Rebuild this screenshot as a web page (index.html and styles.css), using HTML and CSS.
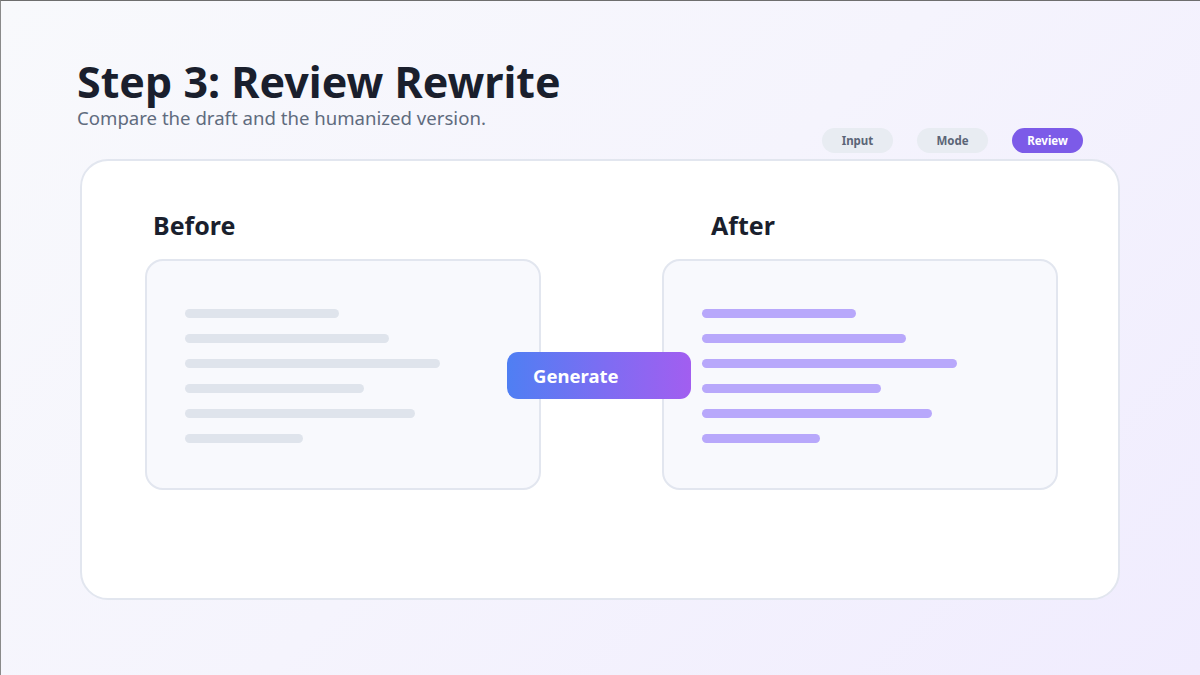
FILE: index.html
```html
<!DOCTYPE html>
<html lang="en">
<head>
<meta charset="utf-8">
<title>Step 3: Review Rewrite</title>
<link rel="stylesheet" href="styles.css">
</head>
<body>
<div class="page">
  <header class="header">
    <h1 class="title">Step 3: Review Rewrite</h1>
    <p class="subtitle">Compare the draft and the humanized version.</p>
  </header>
  <nav class="steps">
    <span class="pill">Input</span>
    <span class="pill">Mode</span>
    <span class="pill pill-active">Review</span>
  </nav>
  <main class="card">
    <section class="col col-before">
      <h2 class="label label-before">Before</h2>
      <div class="box">
        <div class="line gray" style="width:154px"></div>
        <div class="line gray" style="width:204px"></div>
        <div class="line gray" style="width:255px"></div>
        <div class="line gray" style="width:179px"></div>
        <div class="line gray" style="width:230px"></div>
        <div class="line gray" style="width:118px"></div>
      </div>
    </section>
    <section class="col col-after">
      <h2 class="label label-after">After</h2>
      <div class="box">
        <div class="line purple" style="width:154px"></div>
        <div class="line purple" style="width:204px"></div>
        <div class="line purple" style="width:255px"></div>
        <div class="line purple" style="width:179px"></div>
        <div class="line purple" style="width:230px"></div>
        <div class="line purple" style="width:118px"></div>
      </div>
    </section>
    <button class="generate">Generate</button>
  </main>
</div>
</body>
</html>
```
FILE: styles.css
```css
* { box-sizing: border-box; }
html, body { margin: 0; padding: 0; }
body {
  width: 1200px;
  height: 675px;
  overflow: hidden;
  font-family: "Noto Sans", "Open Sans", sans-serif;
}
.page {
  width: 1200px;
  height: 675px;
  border-top: 1px solid #6e6e6e;
  border-left: 1px solid #8a8a8a;
  background: linear-gradient(135deg, #f8f9fc 0%, #f5f4fd 50%, #f0ecfe 100%);
  display: flex;
  flex-direction: column;
}
.header {
  padding: 56px 0 0 76px;
}
.title {
  margin: 0;
  font-size: 43px;
  line-height: 50px;
  font-weight: 700;
  color: #1a1f2d;
  letter-spacing: 0;
}
.subtitle {
  margin: 0;
  font-size: 18.6px;
  line-height: 21px;
  font-weight: 400;
  color: #606b7e;
}
.steps {
  display: flex;
  justify-content: flex-end;
  gap: 24px;
  padding-right: 117px;
  height: 25px;
}
.pill {
  width: 71px;
  height: 25px;
  border-radius: 13px;
  background: #e8ecf2;
  color: #5b6577;
  font-size: 11.5px;
  font-weight: 700;
  display: flex;
  align-items: center;
  justify-content: center;
}
.pill-active {
  background: #7c5be8;
  color: #ffffff;
}
.card {
  position: relative;
  margin: 6px 0 0 79px;
  width: 1040px;
  height: 441px;
  background: #ffffff;
  border: 2px solid #e2e6ef;
  border-radius: 28px;
  padding: 49px 0 0 63px;
  display: grid;
  grid-template-columns: 396px 396px;
  column-gap: 121px;
  align-content: start;
}
.col { display: flex; flex-direction: column; }
.label {
  margin: 0 0 19px 0;
  font-size: 25px;
  line-height: 30px;
  font-weight: 700;
  color: #1a1f2d;
}
.label-before { padding-left: 8px; }
.label-after { padding-left: 49px; }
.box {
  height: 231px;
  background: #f8f9fd;
  border: 2px solid #e2e6ef;
  border-radius: 18px;
  padding: 48px 0 0 38px;
  display: flex;
  flex-direction: column;
  gap: 16px;
}
.line {
  height: 9px;
  border-radius: 5px;
}
.gray { background: #dfe4ec; }
.purple { background: #b8a8fb; }
.generate {
  position: absolute;
  left: 425px;
  top: 191px;
  width: 184px;
  height: 47px;
  border: none;
  border-radius: 11px;
  background: linear-gradient(90deg, #4f7ff3 0%, #7f6cf2 55%, #a25ef0 100%);
  color: #ffffff;
  font-family: "Noto Sans", "Open Sans", sans-serif;
  font-size: 18.5px;
  font-weight: 700;
  text-align: left;
  padding: 0 0 0 26px;
}
```
